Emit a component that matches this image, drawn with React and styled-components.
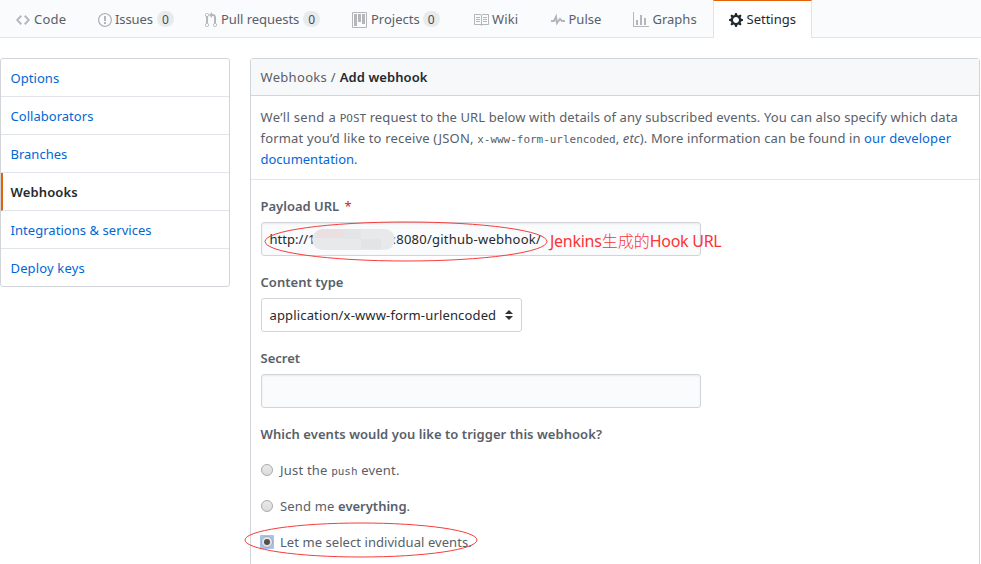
import React from "react";
import styled, { createGlobalStyle } from "styled-components";

const Global = createGlobalStyle`
  *, *::before, *::after { box-sizing: border-box; }
  body {
    margin: 0;
    background: #fff;
    color: #586069;
    font: 13px/21px "Noto Sans", "Open Sans", "Noto Sans CJK SC", sans-serif;
    overflow: hidden;
  }
`;

const Page = styled.div`
  position: relative;
  width: 981px;
  height: 564px;
  overflow: hidden;
`;

const Text = styled.span`
  letter-spacing: ${(p) => p.$track || 0}px;
  white-space: pre;
`;

const Strong = styled.strong`
  font-weight: 600;
  color: ${(p) => p.$color || "inherit"};
  letter-spacing: ${(p) => p.$track || 0}px;
`;

const TabBar = styled.nav`
  display: flex;
  height: 38px;
  background: #fafbfc;
  border-bottom: 1px solid #e1e4e8;
`;

const Tab = styled.a`
  display: flex;
  align-items: center;
  flex: none;
  width: ${(p) => p.$width}px;
  height: 38px;
  padding: ${(p) => (p.$active ? "0 0 1px 15px" : "0 0 0 16px")};
  color: ${(p) => (p.$active ? "#24292e" : "#586069")};
  background: ${(p) => (p.$active ? "#fff" : "transparent")};
  border-style: solid;
  border-color: ${(p) => (p.$active ? "#e36209 #e1e4e8 transparent" : "transparent")};
  border-width: ${(p) => (p.$active ? "1px 1px 0" : "0")};
`;

const TabIcon = styled.svg`
  flex: none;
  height: 16px;
  width: ${(p) => p.$w}px;
  margin: 1px ${(p) => p.$gap}px 0 0;
  fill: ${(p) => (p.$active ? "#24292e" : "#b4b7ba")};
`;

const Counter = styled.span`
  display: flex;
  align-items: center;
  justify-content: center;
  width: 17px;
  height: 16px;
  margin-left: ${(p) => p.$gap}px;
  border-radius: 8px;
  background: #e8eaec;
  color: #444d56;
  font-size: 12px;
`;

const Columns = styled.div`
  display: flex;
  align-items: flex-start;
  gap: 20px;
  padding-top: 20px;
`;

const SideMenu = styled.nav`
  width: 230px;
  border: 1px solid #d1d5da;
  border-radius: 3px;
`;

const SideItem = styled.a`
  display: flex;
  align-items: center;
  height: 38px;
  padding: 2px 0 0 ${(p) => (p.$active ? 7.5 : 9.5)}px;
  color: ${(p) => (p.$active ? "#24292e" : "#0366d6")};
  font-weight: ${(p) => (p.$active ? 600 : 400)};
  border-left: ${(p) => (p.$active ? "2px solid #e36209" : "0")};
  border-bottom: 1px solid #e1e4e8;
  &:last-child { border-bottom: 0; height: 37px; }
`;

const Panel = styled.main`
  width: 730px;
  height: 560px;
  border: 1px solid #d1d5da;
  border-radius: 3px;
`;

const PanelHeader = styled.header`
  height: 37px;
  padding: 8px 10px 0 9.5px;
  background: #f6f8fa;
  border-bottom: 1px solid #d1d5da;
  line-height: 20px;
`;

const Intro = styled.p`
  margin: 0;
  height: 84px;
  padding: 11px 0 0 9.5px;
  border-bottom: 1px solid #e1e4e8;
`;

const Line = styled.span`
  display: block;
  height: 21px;
  white-space: nowrap;
  letter-spacing: ${(p) => p.$track || 0}px;
`;

const Code = styled.code`
  font: 11px "DejaVu Sans Mono", monospace;
  letter-spacing: ${(p) => p.$track || 0}px;
`;

const Link = styled.a`
  color: #0366d6;
`;

const Form = styled.form`
  display: flex;
  flex-direction: column;
  align-items: flex-start;
  padding: 16px 0 0 10px;
`;

const Field = styled.div`
  display: flex;
  flex-direction: column;
  height: 76px;
`;

const Label = styled.label`
  height: ${(p) => p.$height || 26}px;
  margin-left: -0.5px;
  font-weight: 600;
  letter-spacing: ${(p) => p.$track || 0}px;
  white-space: nowrap;
`;

const Required = styled.span`
  color: #cb2431;
  padding-left: 2px;
  font-weight: 400;
`;

const Input = styled.div`
  display: flex;
  align-items: center;
  width: 440px;
  height: 34px;
  padding-left: 7.5px;
  color: #24292e;
  background: #fafbfc;
  border: 1px solid #d1d5da;
  border-radius: 3px;
  box-shadow: inset 0 1px 2px rgba(27, 31, 35, 0.075);
`;

const Redaction = styled.svg`
  position: relative;
  flex: none;
  width: 84px;
  height: 23px;
  margin: 0 -3px 0 -4px;
`;

const Select = styled.div`
  display: flex;
  align-items: center;
  justify-content: space-between;
  width: 261px;
  height: 34px;
  padding: 0 8px 0 7.5px;
  color: #24292e;
  border: 1px solid #d1d5da;
  border-radius: 3px;
`;

const Arrows = styled.svg`
  width: 8px;
  height: 10px;
  fill: #333;
`;

const Choice = styled.label`
  display: flex;
  align-items: center;
  height: 36px;
`;

const RadioFrame = styled.span`
  display: grid;
  place-items: center;
  width: 14px;
  height: 14px;
  margin: 0 6px 0 -1px;
  border-radius: 1px;
  background: ${(p) => (p.$checked ? "#a3c2f6" : "transparent")};
`;

const Radio = styled.span`
  display: grid;
  place-items: center;
  width: 12px;
  height: 12px;
  border: 1px solid #a9a9a9;
  border-radius: 50%;
  background: linear-gradient(#e9e9e9, #dcdcdc);
  &::after {
    content: "";
    width: 6px;
    height: 6px;
    border-radius: 50%;
    background: ${(p) => (p.$checked ? "#505050" : "transparent")};
  }
`;

const Markup = styled.svg`
  position: absolute;
  inset: 0;
  width: 981px;
  height: 564px;
  fill: none;
  stroke: #f83c3c;
  pointer-events: none;
`;

const Note = styled.div`
  position: absolute;
  left: 550px;
  top: 230px;
  color: #fb3434;
  font-size: 16px;
  white-space: nowrap;
  letter-spacing: -0.27px;
`;

const Han = styled.span`
  font: 300 16px/20px "Noto Sans CJK SC", sans-serif;
  letter-spacing: 0;
`;

const tabs = [
  { label: "Code", width: 82, w: 14, gap: 4, track: 0.25,
    d: "M9.5 3L8 4.5 11.5 8 8 11.5 9.5 13 14 8 9.5 3zm-5 0L0 8l4.5 5L6 11.5 2.5 8 6 4.5 4.5 3z" },
  { label: "Issues", width: 107, w: 14, gap: 3, track: -0.1, count: 0, countGap: 4,
    d: "M7 2.3c3.14 0 5.7 2.56 5.7 5.7s-2.56 5.7-5.7 5.7A5.71 5.71 0 0 1 1.3 8c0-3.14 2.56-5.7 5.7-5.7zM7 1C3.14 1 0 4.14 0 8s3.14 7 7 7 7-3.14 7-7-3.14-7-7-7zm1 3H6v5h2V4zm0 6H6v2h2v-2z" },
  { label: "Pull requests", width: 147, w: 12, gap: 4, track: -0.05, count: 0, countGap: 4,
    d: "M11 11.28V5c-.03-.78-.34-1.47-.94-2.06C9.46 2.35 8.78 2.03 8 2H7V0L4 3l3 3V4h1c.27.02.48.11.69.31.21.2.3.42.31.69v6.28A1.993 1.993 0 0 0 10 15a1.993 1.993 0 0 0 1-3.72zm-1 2.92c-.66 0-1.2-.55-1.2-1.2 0-.65.55-1.2 1.2-1.2.65 0 1.2.55 1.2 1.2 0 .65-.55 1.2-1.2 1.2zM4 3c0-1.11-.89-2-2-2a1.993 1.993 0 0 0-1 3.72v6.56A1.993 1.993 0 0 0 2 15a1.993 1.993 0 0 0 1-3.72V4.72c.59-.34 1-.98 1-1.72zm-.8 10c0 .66-.55 1.2-1.2 1.2-.65 0-1.2-.55-1.2-1.2 0-.65.55-1.2 1.2-1.2.65 0 1.2.55 1.2 1.2zM2 4.2C1.34 4.2.8 3.65.8 3c0-.65.55-1.2 1.2-1.2.65 0 1.2.55 1.2 1.2 0 .65-.55 1.2-1.2 1.2z" },
  { label: "Projects", width: 121, w: 15, gap: 4, track: 0, count: 0, countGap: 3,
    d: "M10 12h3V2h-3v10zm-4-2h3V2H6v8zm-4 4h3V2H2v12zm-1 1h13V1H1v14zM14 0H1a1 1 0 0 0-1 1v14a1 1 0 0 0 1 1h13a1 1 0 0 0 1-1V1a1 1 0 0 0-1-1z" },
  { label: "Wiki", width: 78, w: 16, gap: 3, track: 0.1,
    d: "M3 5h4v1H3V5zm0 3h4V7H3v1zm0 2h4V9H3v1zm11-5h-4v1h4V5zm0 2h-4v1h4V7zm0 2h-4v1h4V9zm2-6v9c0 .55-.45 1-1 1H9.5l-1 1-1-1H2c-.55 0-1-.45-1-1V3c0-.55.45-1 1-1h5.5l1 1 1-1H15c.55 0 1 .45 1 1zm-8 .5L7.5 3H2v9h6V3.5zm7-.5H9.5l-.5.5V12h6V3z" },
  { label: "Pulse", width: 82, w: 14, gap: 3.5, track: 0,
    d: "M11.5 8L8.8 5.4 6.6 8.5 5.5 1.6 2.38 8H0v2h3.6l.9-1.8.9 5.4L9 8.5l1.6 1.5H14V8h-2.5z" },
  { label: "Graphs", width: 96, w: 16, gap: 3.5, track: 0,
    d: "M16 14v1H0V0h1v14h15zM5 13H3V8h2v5zm4 0H7V3h2v10zm4 0h-2V6h2v7z" },
  { label: "Settings", width: 99, w: 14, gap: 3.5, track: 0, active: true,
    d: "M14 8.77v-1.6l-1.94-.64-.45-1.09.88-1.84-1.13-1.13-1.81.91-1.09-.45-.69-1.92h-1.6l-.63 1.94-1.11.45-1.84-.88-1.13 1.13.91 1.81-.45 1.09L0 7.23v1.59l1.94.64.45 1.09-.88 1.84 1.13 1.13 1.81-.91 1.09.45.69 1.92h1.59l.63-1.94 1.11-.45 1.84.88 1.13-1.13-.92-1.81.47-1.09L14 8.75v.02zM7 11c-1.66 0-3-1.34-3-3s1.34-3 3-3 3 1.34 3 3-1.34 3-3 3z" },
];

const sections = [
  { label: "Options", track: 0.05 },
  { label: "Collaborators", track: 0.03 },
  { label: "Branches", track: 0 },
  { label: "Webhooks", track: 0.12, active: true },
  { label: "Integrations & services", track: 0.05 },
  { label: "Deploy keys", track: 0.15 },
];

export default function App() {
  return (
    <Page>
      <Global />
      <TabBar>
        {tabs.map((t) => (
          <Tab key={t.label} $width={t.width} $active={t.active}>
            <TabIcon viewBox={`0 0 ${t.w} 16`} $w={t.w} $gap={t.gap} $active={t.active}>
              <path fillRule="evenodd" d={t.d} />
            </TabIcon>
            <Text $track={t.track}>{t.label}</Text>
            {t.count !== undefined && <Counter $gap={t.countGap}>{t.count}</Counter>}
          </Tab>
        ))}
      </TabBar>
      <Columns>
        <SideMenu>
          {sections.map((s) => (
            <SideItem key={s.label} $active={s.active}>
              <Text $track={s.track}>{s.label}</Text>
            </SideItem>
          ))}
        </SideMenu>
        <Panel>
          <PanelHeader>
            <Text $track={0.32}>Webhooks / </Text>
            <Strong $color="#24292e" $track={0.08}>Add webhook</Strong>
          </PanelHeader>
          <Intro>
            <Line $track={0.09}>
              <Text $track={0.32}>We’ll send a </Text><Code>POST</Code> request to the URL below with details of any subscribed events. You can also specify which data
            </Line>
            <Line $track={0.11}>
              <Text $track={0.18}>format you’d like to receive (JSON, </Text><Code $track={-0.03}>x-www-form-urlencoded</Code>, <em>etc</em>). More information can be found in <Link>our developer</Link>
            </Line>
            <Line>
              <Link>documentation</Link>.
            </Line>
          </Intro>
          <Form>
            <Field>
              <Label>Payload URL <Required>*</Required></Label>
              <Input>
                <Text>http://1</Text>
                <Redaction viewBox="0 0 84 23">
                  <rect x="0" y="1" width="83" height="21" rx="10.5" fill="#e8e9eb" />
                  <path d="M3 10V6Q7 1 14 1h17v9z" fill="#eadfe1" />
                  <path d="M31 1h18v10H31z" fill="#e4e5e7" />
                  <path d="M49 11h20v10H49z" fill="#e2e4e6" />
                </Redaction>
                <Text $track={0.24}>:8080/github-webhook/</Text>
              </Input>
            </Field>
            <Field>
              <Label $track={0.03}>Content type</Label>
              <Select>
                <Text $track={0.15}>application/x-www-form-urlencoded</Text>
                <Arrows viewBox="0 0 8 10"><path d="M0 4L4 0l4 4zM0 6h8l-4 4z" /></Arrows>
              </Select>
            </Field>
            <Field>
              <Label>Secret</Label>
              <Input />
            </Field>
            <Label $height={28} $track={0.05}>Which events would you like to trigger this webhook?</Label>
            <Choice>
              <RadioFrame><Radio /></RadioFrame>
              <Text $track={0.2}>Just the <Code>push</Code> event.</Text>
            </Choice>
            <Choice>
              <RadioFrame><Radio /></RadioFrame>
              <Text $track={0.16}>Send me <Strong>everything</Strong>.</Text>
            </Choice>
            <Choice>
              <RadioFrame $checked><Radio $checked /></RadioFrame>
              <Text $track={0.06}>Let me select individual events.</Text>
            </Choice>
          </Form>
        </Panel>
      </Columns>
      <Markup viewBox="0 0 981 564">
        <ellipse cx="406" cy="241.5" rx="141" ry="19.5" />
        <ellipse cx="361" cy="540" rx="116" ry="17" />
      </Markup>
      <Note>Jenkins<Han>生成的</Han>Hook URL</Note>
    </Page>
  );
}
